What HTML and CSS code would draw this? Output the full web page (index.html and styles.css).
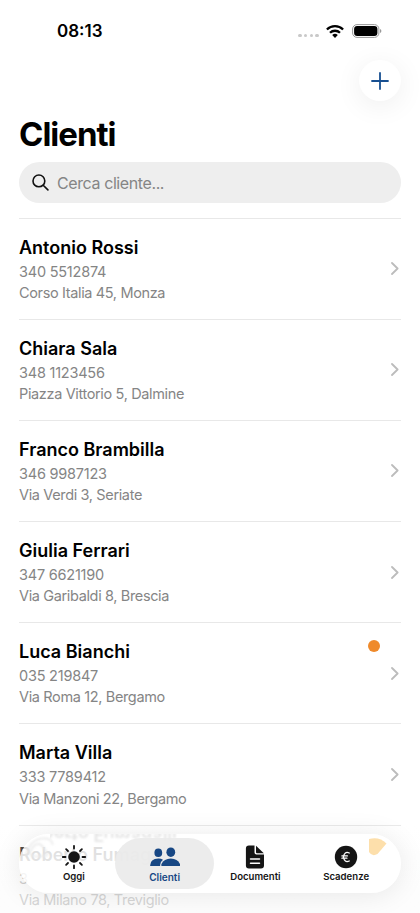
FILE: index.html
```
<!DOCTYPE html>
<html lang="it">
<head>
<meta charset="utf-8">
<meta name="viewport" content="width=device-width, initial-scale=1">
<title>Clienti</title>
<link rel="stylesheet" href="styles.css">
</head>
<body>
<div class="screen">
  <header class="status">
    <span class="time">08:13</span>
    <div class="indicators">
      <span class="signal"><i></i><i></i><i></i><i></i></span>
      <svg class="wifi" viewBox="0 0 18 13"><g fill="none" stroke="#000" stroke-width="2.3"><path d="M.9 4.5a11.6 11.6 0 0 1 16.2 0"/><path d="M4 7.8a7.1 7.1 0 0 1 10 0"/></g><path d="M6.2 10a4 4 0 0 1 5.6 0L9 12.9z"/></svg>
      <svg class="battery" viewBox="0 0 30 14"><rect x=".6" y=".6" width="26.3" height="12.8" rx="4.4" fill="none" stroke="#999" stroke-width="1"/><rect x="2.1" y="2.1" width="23.3" height="9.8" rx="3"/><path d="M28 5v4q1.4-.6 1.4-2T28 5z" fill="#999"/></svg>
    </div>
  </header>
  <div class="toolbar">
    <button class="add" aria-label="Aggiungi"><svg viewBox="0 0 18 18"><path d="M9 1v16M1 9h16" stroke="#174f91" stroke-width="1.8" stroke-linecap="round"/></svg></button>
  </div>
  <h1>Clienti</h1>
  <div class="search">
    <svg viewBox="0 0 17 17"><g fill="none" stroke="#111" stroke-width="1.6" stroke-linecap="round"><circle cx="6.9" cy="6.9" r="5.9"/><path d="m11.2 11.2 4.7 4.7"/></g></svg>
    <span>Cerca cliente...</span>
  </div>
  <main class="list">
    <article class="row"><div><h2>Antonio Rossi</h2><p class="phone">340 5512874</p><p>Corso Italia 45, Monza</p></div><svg class="chevron" viewBox="0 0 8 13"><path d="m1 1 5.6 5.5L1 12"/></svg></article>
    <article class="row"><div><h2>Chiara Sala</h2><p class="phone">348 1123456</p><p>Piazza Vittorio 5, Dalmine</p></div><svg class="chevron" viewBox="0 0 8 13"><path d="m1 1 5.6 5.5L1 12"/></svg></article>
    <article class="row"><div><h2>Franco Brambilla</h2><p class="phone">346 9987123</p><p>Via Verdi 3, Seriate</p></div><svg class="chevron" viewBox="0 0 8 13"><path d="m1 1 5.6 5.5L1 12"/></svg></article>
    <article class="row"><div><h2>Giulia Ferrari</h2><p class="phone">347 6621190</p><p>Via Garibaldi 8, Brescia</p></div><svg class="chevron" viewBox="0 0 8 13"><path d="m1 1 5.6 5.5L1 12"/></svg></article>
    <article class="row"><div><h2>Luca Bianchi</h2><p class="phone">035 219847</p><p>Via Roma 12, Bergamo</p></div><b class="dot"></b><svg class="chevron" viewBox="0 0 8 13"><path d="m1 1 5.6 5.5L1 12"/></svg></article>
    <article class="row"><div><h2>Marta Villa</h2><p class="phone">333 7789412</p><p>Via Manzoni 22, Bergamo</p></div><svg class="chevron" viewBox="0 0 8 13"><path d="m1 1 5.6 5.5L1 12"/></svg></article>
    <article class="row"><div><h2>Roberto Fumagalli</h2><p class="phone">3</p><p>Via Milano 78, Treviglio</p></div></article>
  </main>
  <div class="fade"></div>
  <nav class="tabs">
    <div class="glass" aria-hidden="true">
      <span class="mirror">Roberto Fumagalli</span>
      <svg class="lens" viewBox="0 0 40 40"><path d="M4 25Q10 5 27 5q9 1 9 8M9 22q9-18 17-5 9 10-4 9-12 2-13-4z"/></svg>
      <svg class="wedge" viewBox="0 0 18 18"><path d="M0 1Q10-2 17.500 5.500L8.500 16Q3 19 0 14z"/></svg>
    </div>
    <a class="tab"><svg viewBox="0 0 26 26"><circle cx="13" cy="13" r="5.800"/><path d="M13 1.800v2.700M13 21.500v2.700M1.800 13h2.700M21.500 13h2.700M5.100 5.100 7 7M19 19l1.900 1.900M5.100 20.900 7 19M19 7l1.900-1.900" stroke="currentColor" stroke-width="1.800" stroke-linecap="round"/></svg><span>Oggi</span></a>
    <a class="tab active"><svg class="people" viewBox="0 0 30 20"><ellipse cx="8.300" cy="5.800" rx="3.900" ry="4.300"/><path d="M.2 19q-.5-7 8.200-7.500 2.800 0 4.600 1.200-3.300 2.400-2.800 6.300z"/><ellipse cx="20.800" cy="5.200" rx="4.400" ry="4.800"/><path d="M11.800 19q-1-.3-.2-2.300 2.400-5 9.200-5.200 6.800.2 9 5.200.8 2-.2 2.300z"/></svg><span>Clienti</span></a>
    <a class="tab"><svg viewBox="0 0 26 26"><path d="M6.900 1.500H12.500V8.500q0 2 2 2H22V21.500q0 3-3 3H6.900q-3 0-3-3v-17q0-3 3-3z"/><path d="M14 1.700 21.800 9.200H15q-1 0-1-1z"/><path d="M8.500 15h9M8.500 19.300h9" stroke="#fff" stroke-width="1.500" stroke-linecap="round"/></svg><span>Documenti</span></a>
    <a class="tab"><svg viewBox="0 0 26 26"><circle cx="13" cy="13" r="11.200"/><path d="M16.300 9q-4.900-2.100-5.900 4 1 6.100 5.900 4M8.900 11.900h5.500M8.900 14.200h5" fill="none" stroke="#fff" stroke-width="1.300" stroke-linecap="round"/></svg><span>Scadenze</span></a>
  </nav>
</div>
</body>
</html>
```
FILE: styles.css
```
* { box-sizing: border-box; }
body { margin: 0; background: #fff; font-family: Inter, "Liberation Sans", sans-serif; color: #000; }
.screen { position: relative; width: 420px; height: 913px; overflow: hidden; background: #fff; }
.status { height: 60px; padding: 2px 38px 0 57px; display: flex; align-items: center; justify-content: space-between; }
.time { font-size: 17px; font-weight: 600; }
.indicators { display: flex; align-items: center; }
.signal { display: flex; gap: 2.200px; margin: 9px 7px 0 0; }
.signal i { width: 3.600px; height: 3.600px; border-radius: 50%; background: #c9c9c9; }
.wifi { width: 18px; height: 13px; margin-right: 8px; }
.battery { width: 30px; height: 14px; }
.toolbar { height: 52px; padding-right: 19px; display: flex; justify-content: flex-end; }
.add { width: 42px; height: 41px; padding: 0; border: 0; border-radius: 50%; background: #fff; box-shadow: 0 5px 28px rgba(0,0,0,.07); display: grid; place-items: center; }
.add svg { width: 18px; height: 18px; }
h1 { height: 50px; margin: 0 19px; font-size: 33px; line-height: 44px; font-weight: 700; letter-spacing: -1px; }
.search { height: 41px; margin: 0 19px; padding: 0 13px; border-radius: 21px; background: #eee; display: flex; align-items: center; gap: 8px; font-size: 16px; letter-spacing: -.4px; color: #858585; }
.search svg { width: 17px; height: 17px; }
.list { margin: 14.500px 19px 0; }
.row { position: relative; height: 101.200px; padding-top: 16px; border-top: 1px solid #e8e8e8; display: flex; justify-content: space-between; }
h2 { margin: 0; font-size: 18px; line-height: 26px; font-weight: 600; }
p { margin: 0; font-size: 14.500px; line-height: 21.200px; letter-spacing: -.36px; color: #858585; }
.phone { letter-spacing: -.22px; }
.chevron { width: 8px; height: 13px; margin: 27.500px 2px 0 0; fill: none; stroke: #bcbcbc; stroke-width: 1.800; stroke-linecap: round; stroke-linejoin: round; }
.dot { position: absolute; right: 21px; top: 17px; width: 12px; height: 12px; border-radius: 50%; background: #ef8a2b; }
.fade { position: absolute; left: 0; right: 0; top: 825px; bottom: 0; background: linear-gradient(rgba(255,255,255,.1), rgba(252,252,252,.68) 75%); }
.tabs { position: absolute; left: 19px; right: 19px; top: 834px; height: 59px; border-radius: 30px; padding: 4px 9.500px; background: rgba(255,255,255,.82); box-shadow: 0 2px 28px rgba(0,0,0,.09); display: flex; }
.glass { position: absolute; inset: 0; overflow: hidden; border-radius: 30px; }
.mirror { position: absolute; left: 1px; top: -12px; font-size: 18px; line-height: 25px; font-weight: 600; color: #e6e6e6; transform: scaleY(-1); filter: blur(.8px); clip-path: inset(0 0 12px 30px); }
.lens { position: absolute; left: 3px; top: 0; width: 34px; height: 34px; fill: none; stroke: #e9e9e9; stroke-width: 2; filter: blur(.8px); }
.wedge { position: absolute; right: 14px; top: 4px; width: 18px; height: 18px; fill: #fddfab; }
.tab { position: relative; flex: 1; display: flex; flex-direction: column; align-items: center; padding-top: 6px; color: #151515; font-size: 9.600px; line-height: 12px; font-weight: 600; }
.tab svg { position: relative; width: 26px; height: 26px; fill: currentColor; }
.tab span { position: relative; margin-top: 1px; }
.tab .people { width: 30px; height: 20px; margin: 3px 0; }
.active { color: #174784; }
.active span { font-size: 10px; }
.active::before { content: ""; position: absolute; inset: 0 -4px; border-radius: 27px; background: rgba(235,235,235,.93); }
```
